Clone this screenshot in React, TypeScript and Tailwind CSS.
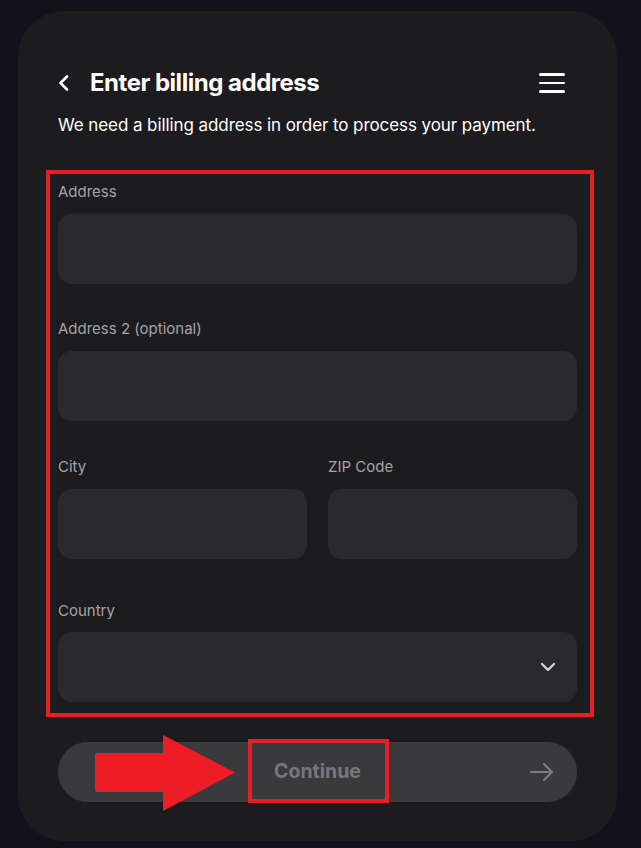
import { ChevronDown } from 'lucide-react';

const fieldLabel = 'text-[15px] leading-5 text-[#a3a3a6]';
const fieldBox = 'h-[70px] rounded-[14px] bg-[#2a2a2c]';

const Field = ({ label, className = '' }: { label: string; className?: string }) => (
  <div className={`flex flex-col gap-3 ${className}`}>
    <span className={fieldLabel}>{label}</span>
    <div className={fieldBox} />
  </div>
);

const App = () => {
  return (
    <div
      className="min-h-[848px] bg-[#12121b] pl-[18px] pr-6 pt-[11px]"
      style={{ fontFamily: 'Inter, "Liberation Sans", sans-serif' }}
    >
      <div className="h-[830px] rounded-[46px] bg-[#1c1c1e] px-10 pt-[58px]">
        {/* header */}
        <div className="flex h-7 items-center">
          <svg width="14" height="16" viewBox="0 0 14 16" className="ml-[-1px]" aria-hidden="true">
            <path d="M10 1.5 L3.5 8 L10 14.5" fill="none" stroke="#fff" strokeWidth="2.6" strokeLinecap="round" strokeLinejoin="round" />
          </svg>
          <h1 className="ml-[19px] text-[24px] font-bold tracking-[-0.02em] text-white">
            Enter billing address
          </h1>
          <button className="ml-auto mr-3 flex w-[26px] flex-col gap-[6px]" aria-label="Menu">
            <span className="h-[2.5px] rounded-full bg-white" />
            <span className="h-[2.5px] rounded-full bg-white" />
            <span className="h-[2.5px] rounded-full bg-white" />
          </button>
        </div>
        <p className="mt-4 text-[17px] leading-6 tracking-[-0.005em] text-white">
          We need a billing address in order to process your payment.
        </p>

        {/* form */}
        <div className="relative mt-[45px] flex flex-col">
          <div className="pointer-events-none absolute -top-[12px] -left-3 -right-[17px] -bottom-[15px] border-4 border-[#e81d25]" />
          <Field label="Address" />
          <Field label="Address 2 (optional)" className="mt-[35px]" />
          <div className="mt-9 grid grid-cols-2 gap-[21px]">
            <Field label="City" />
            <Field label="ZIP Code" />
          </div>
          <div className="mt-[42px] flex flex-col gap-[11px]">
            <span className={fieldLabel}>Country</span>
            <div className={`${fieldBox} flex items-center justify-end pr-[17px]`}>
              <ChevronDown size={24} strokeWidth={2.4} className="text-[#d4d4d6]" />
            </div>
          </div>
        </div>

        {/* continue */}
        <div className="relative mt-10 flex h-[60px] items-center justify-center rounded-full bg-[#3a3a3c]">
          <span className="text-[19.5px] font-bold text-[#77777a]">Continue</span>
          <svg width="26" height="20" viewBox="0 0 26 20" className="absolute right-[22px]" aria-hidden="true">
            <path d="M2 10 H23 M15 2 L23 10 L15 18" fill="none" stroke="#7d7d80" strokeWidth="2" strokeLinecap="round" strokeLinejoin="round" />
          </svg>
          <div className="pointer-events-none absolute -top-[3px] left-[190px] h-16 w-[141px] border-4 border-[#e81d25]" />
          <svg width="141" height="76" viewBox="0 0 141 76" className="pointer-events-none absolute -top-[7px] left-[37px]" aria-hidden="true">
            <path d="M2 18 H68 V0 L140 37.5 L68 76 V57 H2 Q0 57 0 55 V20 Q0 18 2 18 Z" fill="#ee1c25" />
          </svg>
        </div>
      </div>
    </div>
  );
};

export default App;
